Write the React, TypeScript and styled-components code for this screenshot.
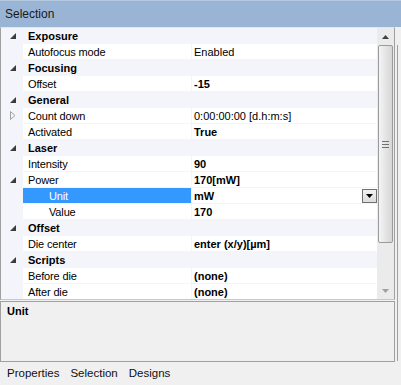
import React from "react"
import styled, { createGlobalStyle } from "styled-components"

const GlobalStyle = createGlobalStyle`
  html, body {
    margin: 0;
    padding: 0;
    background: #f0f0f0;
  }
  body {
    font-family: "Liberation Sans", Arial, sans-serif;
    font-size: 11px;
    color: #000;
  }
`

type Row =
  | { kind: "category"; label: string }
  | {
      kind: "prop"
      label: string
      value: string
      bold?: boolean
      expander?: "open" | "closed"
      sub?: boolean
      selected?: boolean
      dropdown?: boolean
    }

const rows: Row[] = [
  { kind: "category", label: "Exposure" },
  { kind: "prop", label: "Autofocus mode", value: "Enabled" },
  { kind: "category", label: "Focusing" },
  { kind: "prop", label: "Offset", value: "-15", bold: true },
  { kind: "category", label: "General" },
  { kind: "prop", label: "Count down", value: "0:00:00:00 [d.h:m:s]", expander: "closed" },
  { kind: "prop", label: "Activated", value: "True", bold: true },
  { kind: "category", label: "Laser" },
  { kind: "prop", label: "Intensity", value: "90", bold: true },
  { kind: "prop", label: "Power", value: "170[mW]", bold: true, expander: "open" },
  { kind: "prop", label: "Unit", value: "mW", bold: true, sub: true, selected: true, dropdown: true },
  { kind: "prop", label: "Value", value: "170", bold: true, sub: true },
  { kind: "category", label: "Offset" },
  { kind: "prop", label: "Die center", value: "enter (x/y)[µm]", bold: true },
  { kind: "category", label: "Scripts" },
  { kind: "prop", label: "Before die", value: "(none)", bold: true },
  { kind: "prop", label: "After die", value: "(none)", bold: true },
]

const Window = styled.div`
  width: 401px;
  height: 385px;
  display: flex;
  flex-direction: column;
  background: #f0f0f0;
  overflow: hidden;
`

const TitleBar = styled.div`
  height: 27px;
  flex: none;
  display: flex;
  align-items: center;
  padding: 0 0 1px 5px;
  background: #99b4d4;
  border-top: 1px solid #b4c8e0;
  box-sizing: border-box;
  font-size: 12px;
  color: #1a1a1a;
`

const Body = styled.div`
  height: 334px;
  flex: none;
  display: flex;
`

const MainColumn = styled.div`
  width: 395px;
  display: flex;
  flex-direction: column;
`

const SideStrip = styled.div`
  flex: 1;
  margin: 18px 0 0 2px;
  border-left: 1px solid #a0a0a0;
`

const Grid = styled.div`
  height: 273px;
  flex: none;
  display: flex;
  border: 1px solid #a0a0a0;
  border-top: 1px solid #dfe6ef;
  border-bottom-color: #c8c8c8;
  background: #f3f5fa;
  box-sizing: border-box;
`

const RowList = styled.div`
  flex: 1;
  display: flex;
  flex-direction: column;
  overflow: hidden;
`

const CategoryRow = styled.div`
  height: 16px;
  flex: none;
  display: flex;
  align-items: center;
  background: #f3f5fa;
  font-weight: bold;
`

const PropRow = styled.div`
  height: 16px;
  flex: none;
  display: grid;
  grid-template-columns: 21px 168px 1fr;
  column-gap: 1px;
  border-bottom: 1px solid #f3f5fa;
  box-sizing: border-box;
`

const Gutter = styled.div`
  width: 21px;
  flex: none;
  display: flex;
  align-items: center;
  justify-content: center;
  padding-left: 2px;
  box-sizing: border-box;
  background: #f3f5fa;
`

const NameCell = styled.div<{ $sub?: boolean; $selected?: boolean }>`
  display: flex;
  align-items: center;
  padding-left: ${p => (p.$sub ? 26 : 5)}px;
  background: ${p => (p.$selected ? "#3399ff" : "#fff")};
  color: ${p => (p.$selected ? "#fff" : "#000")};
  white-space: nowrap;
  overflow: hidden;
  letter-spacing: -0.15px;
`

const ValueCell = styled.div<{ $bold?: boolean }>`
  display: flex;
  align-items: center;
  justify-content: space-between;
  padding-left: 2px;
  background: #fff;
  font-weight: ${p => (p.$bold ? "bold" : "normal")};
  white-space: nowrap;
`

const DropButton = styled.div`
  width: 15px;
  height: 14px;
  box-sizing: border-box;
  border: 1px solid #707070;
  background: linear-gradient(#f2f2f2, #dcdcdc);
  display: flex;
  align-items: center;
  justify-content: center;
`

const ScrollBar = styled.div`
  width: 17px;
  flex: none;
  display: flex;
  flex-direction: column;
  background: #ebebeb;
`

const ArrowButton = styled.div`
  height: 17px;
  flex: none;
  display: flex;
  align-items: center;
  justify-content: center;
`

const Thumb = styled.div`
  height: 196px;
  flex: none;
  margin: 0 1px;
  border: 1px solid #9a9a9a;
  border-radius: 2px;
  background: linear-gradient(to right, #f4f4f4, #e2e2e2 60%, #d6d6d6);
  display: flex;
  align-items: center;
  justify-content: center;
`

const Track = styled.div`
  flex: 1;
`

const HelpPane = styled.div`
  height: 61px;
  margin-top: 1px;
  flex: none;
  border: 1px solid #a0a0a0;
  box-sizing: border-box;
  padding: 3px 6px;
  background: #f0f0f0;
  font-weight: bold;
`

const TabBar = styled.div`
  flex: 1;
  display: flex;
  align-items: center;
  gap: 11px;
  padding: 0 0 0 7px;
  font-size: 11.5px;
  color: #111;
`

const Expander = ({ state }: { state: "open" | "closed" }) =>
  state === "open" ? (
    <svg width="6" height="6" viewBox="0 0 6 6">
      <path d="M6 0 L6 6 L0 6 Z" fill="#3c3c3c" />
    </svg>
  ) : (
    <svg width="6" height="9" viewBox="0 0 6 9">
      <path d="M0.5 0.5 L5 4.5 L0.5 8.5 Z" fill="none" stroke="#a0a0a0" />
    </svg>
  )

const App: React.FC = () => {
  return (
    <>
      <GlobalStyle />
      <Window>
        <TitleBar>Selection</TitleBar>
        <Body>
          <MainColumn>
            <Grid>
              <RowList>
                {rows.map((row, i) =>
                  row.kind === "category" ? (
                    <CategoryRow key={i}>
                      <Gutter>
                        <Expander state="open" />
                      </Gutter>
                      <span style={{ paddingLeft: 6 }}>{row.label}</span>
                    </CategoryRow>
                  ) : (
                    <PropRow key={i}>
                      <Gutter>{row.expander && <Expander state={row.expander} />}</Gutter>
                      <NameCell $sub={row.sub} $selected={row.selected}>
                        {row.label}
                      </NameCell>
                      <ValueCell $bold={row.bold}>
                        <span>{row.value}</span>
                        {row.dropdown && (
                          <DropButton>
                            <svg width="7" height="4" viewBox="0 0 7 4">
                              <path d="M0 0 L7 0 L3.5 4 Z" fill="#000" />
                            </svg>
                          </DropButton>
                        )}
                      </ValueCell>
                    </PropRow>
                  )
                )}
              </RowList>
              <ScrollBar>
                <ArrowButton>
                  <svg width="7" height="4" viewBox="0 0 7 4">
                    <path d="M0 4 L7 4 L3.5 0 Z" fill="#404040" />
                  </svg>
                </ArrowButton>
                <Thumb>
                  <svg width="7" height="7" viewBox="0 0 7 7">
                    <path d="M0 0.5 H7 M0 3.5 H7 M0 6.5 H7" stroke="#707070" />
                  </svg>
                </Thumb>
                <Track />
                <ArrowButton>
                  <svg width="7" height="4" viewBox="0 0 7 4">
                    <path d="M0 0 L7 0 L3.5 4 Z" fill="#a0a0a0" />
                  </svg>
                </ArrowButton>
              </ScrollBar>
            </Grid>
            <HelpPane>Unit</HelpPane>
          </MainColumn>
          <SideStrip />
        </Body>
        <TabBar>
          <span>Properties</span>
          <span>Selection</span>
          <span>Designs</span>
        </TabBar>
      </Window>
    </>
  )
}

export default App
